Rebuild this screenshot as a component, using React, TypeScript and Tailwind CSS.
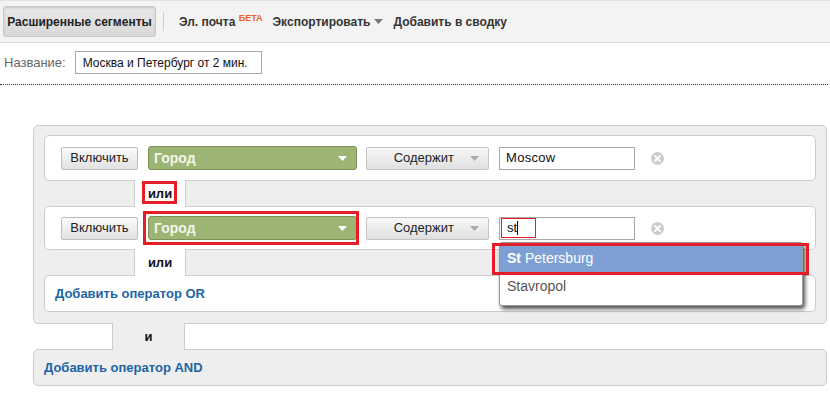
import React from "react";

const Arrow = ({ color }: { color: string }) => (
  <svg width="9" height="5" viewBox="0 0 9 5">
    <path d="M0 0 L9 0 L4.5 5 Z" fill={color} />
  </svg>
);

const ClearIcon = () => (
  <svg width="13" height="13" viewBox="0 0 13 13">
    <circle cx="6.5" cy="6.5" r="6.5" fill="#cccccc" />
    <path d="M4 4 L9 9 M9 4 L4 9" stroke="#fff" strokeWidth="1.8" strokeLinecap="round" />
  </svg>
);

const FilterRow = ({
  value,
  focused,
  marked,
}: {
  value: string;
  focused?: boolean;
  marked?: boolean;
}) => (
  <div className="flex items-center h-full pl-[16px]">
    <button className="h-[23px] w-[77px] border border-[#bdbdbd] rounded-[2px] bg-gradient-to-b from-[#fafafa] to-[#e2e2e2] text-[13px] text-[#222]">
      Включить
    </button>
    <div className="relative ml-[10px]">
      <div className="h-[24px] w-[209px] border border-[#7d9155] rounded-[3px] bg-[#9db574] flex items-center justify-between pl-[5px] pr-[9px]">
        <span className="text-[14px] font-bold text-[#f4f6e8]">Город</span>
        <Arrow color="#ffffff" />
      </div>
      {marked && (
        <div className="absolute -left-[5px] -top-[5px] w-[216px] h-[34px] border-[3px] border-[#e41e26]" />
      )}
    </div>
    <button className="ml-[9px] h-[23px] w-[123px] border border-[#c4c4c4] rounded-[2px] bg-gradient-to-b from-[#f8f8f8] to-[#e0e0e0] flex items-center justify-end pr-[9px] gap-[16px]">
      <span className="text-[13px] text-[#222]">Содержит</span>
      <Arrow color="#aaaaaa" />
    </button>
    <div className="relative ml-[10px]">
      <div className="h-[23px] w-[136px] border border-[#a8a8a8] bg-white flex items-center pl-[6px]">
        {focused ? (
          <span className="text-[13px] text-[#111] border border-[#e41e26] h-[20px] w-[35px] -ml-[5px] pl-[5px] flex items-center">
            st<span className="w-px h-[14px] bg-black" />
          </span>
        ) : (
          <span className="text-[13px] text-[#111] tracking-[0.3px]">{value}</span>
        )}
      </div>
      {focused && (
        <div className="absolute left-0 top-[25px] z-20 w-[304px]">
          <div className="bg-white border border-[#999] rounded-[3px] shadow-[2px_3px_4px_rgba(0,0,0,0.7)] pt-[2px] pb-[4px]">
            <div className="h-[28px] bg-[#7e9fd4] flex items-center pl-[7px] text-[14px] text-white">
              <span className="font-bold">St</span>&nbsp;Petersburg
            </div>
            <div className="h-[28px] flex items-center pl-[7px] text-[14px] text-[#555]">
              Stavropol
            </div>
          </div>
          <div className="absolute -left-[7px] top-px w-[317px] h-[32px] border-[3px] border-[#e41e26]" />
        </div>
      )}
    </div>
    <div className="ml-[16px] flex items-center">
      <ClearIcon />
    </div>
  </div>
);

const OrTab = ({ marked }: { marked?: boolean }) => (
  <div className="flex h-[25px]">
    <div className="w-[91px] border-r border-[#cccccc]" />
    <div className="relative z-10 w-[50px] bg-white -my-px flex items-center justify-center">
      <span className="text-[13px] font-bold text-[#111] relative">
        или
        {marked && (
          <span className="absolute -left-[6px] -top-[3px] w-[35px] h-[23px] border-[3px] border-[#e41e26]" />
        )}
      </span>
    </div>
    <div className="flex-1 border-l border-[#cccccc]" />
  </div>
);

export default function App() {
  return (
    <div className="w-[830px] h-[394px] bg-white overflow-hidden font-['Liberation_Sans',Arial,sans-serif]">
      {/* toolbar */}
      <div className="h-[43px] bg-[#f3f3f3] border-t border-[#e2e2e2] border-b border-b-[#dddddd] flex items-center">
        <button className="ml-[3px] h-[31px] w-[153px] rounded-[3px] border border-[#c9c9c9] bg-gradient-to-b from-[#e8e8e8] to-[#d9d9d9] shadow-[inset_0_1px_2px_rgba(0,0,0,0.15)] text-[12px] font-bold text-[#222]">
          Расширенные сегменты
        </button>
        <div className="ml-[7px] w-px h-[19px] bg-[#cfcfcf]" />
        <span className="ml-[15px] text-[12px] font-bold text-[#333]">
          Эл. почта <sup className="text-[9px] text-[#e8641b] -top-[5px]">БЕТА</sup>
        </span>
        <span className="ml-[10px] text-[12px] font-bold text-[#333] flex items-center gap-[4px]">
          Экспортировать <Arrow color="#777" />
        </span>
        <span className="ml-[10px] text-[12px] font-bold text-[#333]">Добавить в сводку</span>
      </div>

      {/* name */}
      <div className="h-[39px] flex items-center">
        <span className="ml-[4px] text-[13px] text-[#666]">Название:</span>
        <div className="ml-[9px] h-[23px] w-[187px] border border-[#a9a9a9] flex items-center pl-[7px] text-[12px] text-[#111]">
          Москва и Петербург от 2 мин.
        </div>
      </div>
      <div className="mt-[2px] mr-[2px] border-b border-dotted border-[#333]" />

      {/* segment box */}
      <div className="mt-[40px] ml-[33px] w-[794px] h-[199px] bg-[#eeeeee] border border-[#cccccc] rounded-[5px] px-[10px] pt-[9px]">
        <div className="h-[46px] bg-white border border-[#cccccc] rounded-[5px]">
          <FilterRow value="Moscow" />
        </div>
        <OrTab marked />
        <div className="relative h-[44px] bg-white border border-[#cccccc] rounded-[5px]">
          <FilterRow value="st" focused marked />
        </div>
        <OrTab />
        <div className="h-[37px] bg-white border border-[#cccccc] rounded-[5px] flex items-center pl-[10px]">
          <span className="text-[13px] font-bold text-[#1d64a5]">Добавить оператор OR</span>
        </div>
      </div>

      <div className="flex h-[25px] ml-[33px] w-[794px]">
        <div className="w-[80px] border-r border-[#cccccc]" />
        <div className="w-[71px] bg-[#eeeeee] -my-px relative z-10 flex items-center justify-center">
          <span className="text-[13px] font-bold text-[#111]">и</span>
        </div>
        <div className="flex-1 border-l border-[#cccccc]" />
      </div>
      <div className="ml-[33px] w-[794px] h-[37px] bg-[#eeeeee] border border-[#cccccc] rounded-[5px] flex items-center pl-[10px]">
        <span className="text-[13px] font-bold text-[#1d64a5]">Добавить оператор AND</span>
      </div>
    </div>
  );
}
